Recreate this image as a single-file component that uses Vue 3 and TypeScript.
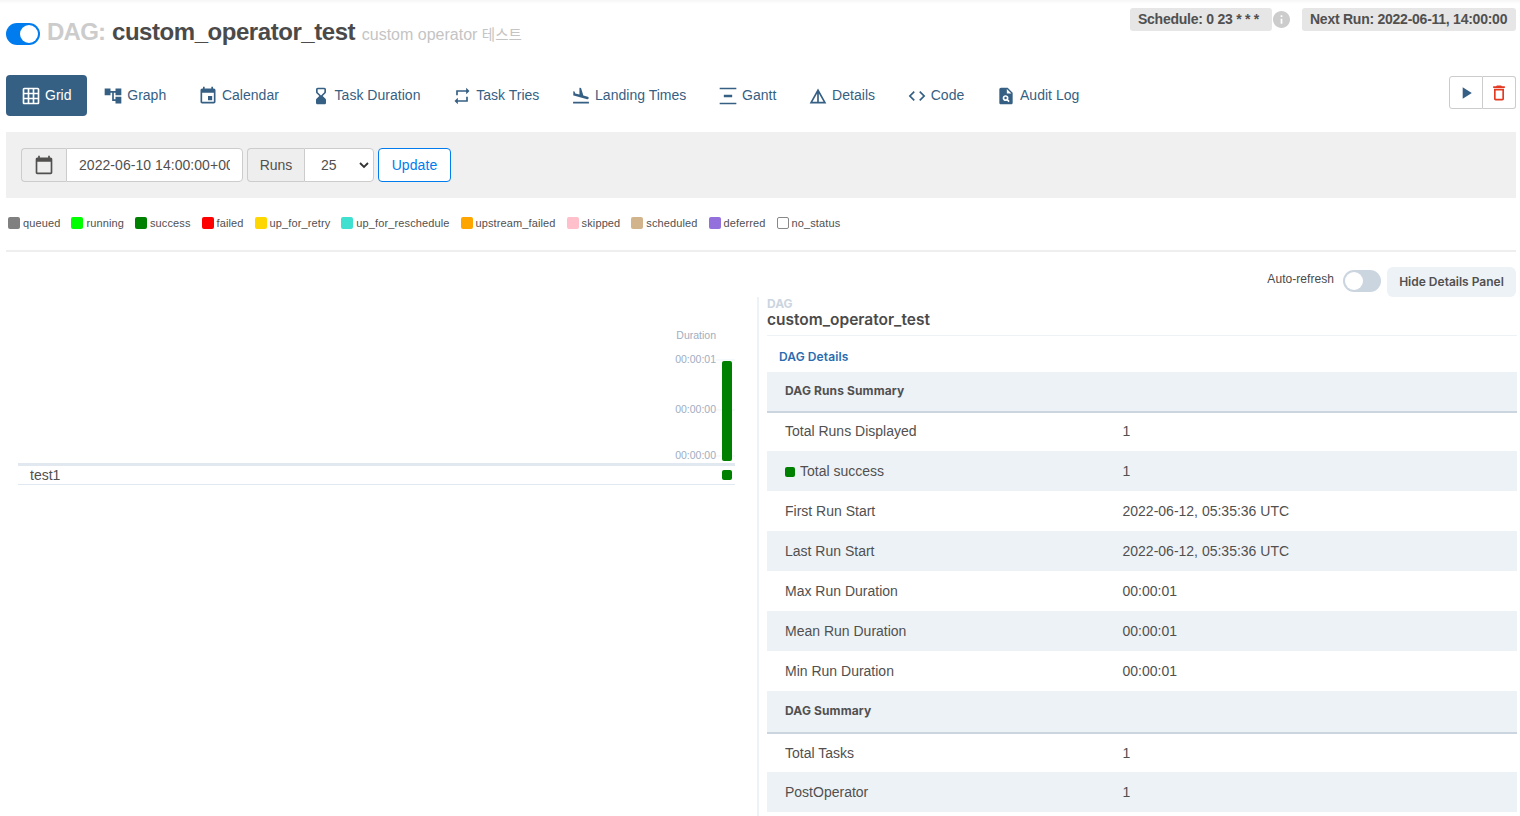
<script setup lang="ts">
interface Tab { label: string; paths: string[] }
const tabs: Tab[] = [
  { label: 'Grid', paths: ['M20 2H4c-1.1 0-2 .9-2 2v16c0 1.1.9 2 2 2h16c1.1 0 2-.9 2-2V4c0-1.1-.9-2-2-2zM8 20H4v-4h4v4zm0-6H4v-4h4v4zm0-6H4V4h4v4zm6 12h-4v-4h4v4zm0-6h-4v-4h4v4zm0-6h-4V4h4v4zm6 12h-4v-4h4v4zm0-6h-4v-4h4v4zm0-6h-4V4h4v4z'] },
  { label: 'Graph', paths: ['M22 11V3h-7v3H9V3H2v8h7V8h2v10h4v3h7v-8h-7v3h-2V8h2v3z'] },
  { label: 'Calendar', paths: ['M17 12h-5v5h5v-5zM16 1v2H8V1H6v2H5c-1.11 0-1.99.9-1.99 2L3 19c0 1.1.89 2 2 2h14c1.1 0 2-.9 2-2V5c0-1.1-.9-2-2-2h-1V1h-2zm3 18H5V8h14v11z'] },
  { label: 'Task Duration', paths: ['M16 22c1.1 0 2-.9 2-2l-.01-3.18c0-.53-.21-1.03-.58-1.41L14 12l3.41-3.43c.37-.37.58-.88.58-1.41L18 4c0-1.1-.9-2-2-2H8C6.9 2 6 2.9 6 4v3.16c0 .53.21 1.04.58 1.42L10 12l-3.41 3.4c-.38.38-.59.89-.59 1.42V20c0 1.1.9 2 2 2h8zM8 7.09V4h8v3.09c0 .27-.11.52-.29.71L12 11.5 8.29 7.79C8.11 7.61 8 7.35 8 7.09z'] },
  { label: 'Task Tries', paths: ['M7 7h10v3l4-4-4-4v3H5v6h2V7zm10 10H7v-3l-4 4 4 4v-3h12v-6h-2v4z'] },
  { label: 'Landing Times', paths: ['M2.5 19h19v2h-19zm7.18-5.73l4.35 1.16 5.31 1.42c.8.21 1.62-.26 1.84-1.06.21-.8-.26-1.62-1.06-1.84l-5.31-1.42-2.76-9.02L10.12 2v8.28L5.15 8.95l-.93-2.32-1.45-.39v5.17l1.6.43 5.31 1.43z'] },
  { label: 'Gantt', paths: ['M22 2v2H2V2h20zM7 10.5v3h10v-3H7zM2 20v2h20v-2H2z'] },
  { label: 'Details', paths: ['M12 3L2 21h20L12 3zm1 5.92L18.6 19H13V8.92zm-2 0V19H5.4L11 8.92z'] },
  { label: 'Code', paths: ['M9.4 16.6L4.8 12l4.6-4.6L8 6l-6 6 6 6 1.4-1.4zm5.2 0l4.6-4.6-4.6-4.6L16 6l6 6-6 6-1.4-1.4z'] },
  { label: 'Audit Log', paths: ['M14 2H6c-1.1 0-2 .9-2 2v16c0 1.1.9 2 2 2h12c1.1 0 2-.9 2-2V8l-6-6zm1.04 17.45l-1.88-1.88c-1.33.71-3.01.53-4.13-.59-1.37-1.37-1.37-3.58 0-4.95s3.58-1.37 4.95 0c1.12 1.12 1.31 2.8.59 4.13l1.88 1.88-1.41 1.41zM13 9V3.5L18.5 9H13z', 'M11.5 13a1.5 1.5 0 1 0 0 3 1.5 1.5 0 0 0 0-3z'] },
]
const legend: { name: string; color: string }[] = [
  { name: 'queued', color: 'gray' },
  { name: 'running', color: 'lime' },
  { name: 'success', color: 'green' },
  { name: 'failed', color: 'red' },
  { name: 'up_for_retry', color: 'gold' },
  { name: 'up_for_reschedule', color: 'turquoise' },
  { name: 'upstream_failed', color: 'orange' },
  { name: 'skipped', color: 'pink' },
  { name: 'scheduled', color: 'tan' },
  { name: 'deferred', color: 'mediumpurple' },
  { name: 'no_status', color: 'white' },
]
interface Row { label: string; value?: string; head?: boolean; dot?: boolean }
const rows: Row[] = [
  { label: 'DAG Runs Summary', head: true },
  { label: 'Total Runs Displayed', value: '1' },
  { label: 'Total success', value: '1', dot: true },
  { label: 'First Run Start', value: '2022-06-12, 05:35:36 UTC' },
  { label: 'Last Run Start', value: '2022-06-12, 05:35:36 UTC' },
  { label: 'Max Run Duration', value: '00:00:01' },
  { label: 'Mean Run Duration', value: '00:00:01' },
  { label: 'Min Run Duration', value: '00:00:01' },
  { label: 'DAG Summary', head: true },
  { label: 'Total Tasks', value: '1' },
  { label: 'PostOperator', value: '1' },
]
</script>

<template>
  <div class="page">
    <header class="top">
      <div class="title-wrap">
        <span class="pause"><span class="knob"></span></span>
        <h1 class="title"><span class="dag">DAG:</span> <span class="name">custom_operator_test</span> <small class="sub">custom operator <span class="ko">테스트</span></small></h1>
      </div>
      <div class="sched">
        <span class="badge">Schedule: 0 23 * * *</span>
        <svg class="info" viewBox="2 2 20 20"><path d="M12 2C6.48 2 2 6.48 2 12s4.48 10 10 10 10-4.48 10-10S17.52 2 12 2zm1 15h-2v-6h2v6zm0-8h-2V7h2v2z" /></svg>
        <span class="badge next">Next Run: 2022-06-11, 14:00:00</span>
      </div>
    </header>

    <nav class="nav">
      <ul class="tabs">
        <li v-for="t in tabs" :key="t.label" class="tab" :class="{ active: t.label === 'Grid' }">
          <svg class="ticon" viewBox="0 0 24 24"><path v-for="p in t.paths" :key="p" :d="p" /></svg>
          <span>{{ t.label }}</span>
        </li>
      </ul>
      <div class="actions">
        <button class="act"><svg viewBox="0 0 24 24" class="play"><path d="M8 5v14l11-7z" /></svg></button>
        <button class="act"><svg viewBox="0 0 24 24" class="trash"><path d="M6 19c0 1.1.9 2 2 2h8c1.1 0 2-.9 2-2V7H6v12zM8 9h8v10H8V9zm7.5-5l-1-1h-5l-1 1H5v2h14V4z" /></svg></button>
      </div>
    </nav>

    <section class="well">
      <div class="group">
        <span class="addon cal"><svg viewBox="0 0 24 24"><path d="M20 3h-1V1h-2v2H7V1H5v2H4c-1.1 0-2 .9-2 2v16c0 1.1.9 2 2 2h16c1.1 0 2-.9 2-2V5c0-1.1-.9-2-2-2zm0 18H4V8h16v13z" /></svg></span>
        <span class="field"><span class="clip">2022-06-10 14:00:00+00:00</span></span>
      </div>
      <div class="group">
        <span class="addon runs">Runs</span>
        <span class="field sel">25<svg viewBox="0 0 12 12" class="chev"><path d="M2 4l4 4 4-4" /></svg></span>
      </div>
      <button class="update">Update</button>
    </section>

    <div class="legend">
      <span v-for="l in legend" :key="l.name" class="leg">
        <i class="swatch" :class="{ empty: l.name === 'no_status' }" :style="{ background: l.color }"></i>{{ l.name }}
      </span>
    </div>
    <hr class="rule" />

    <div class="refresh">
      <span class="auto">Auto-refresh</span>
      <span class="switch"><span class="sknob"></span></span>
      <button class="hide">Hide Details Panel</button>
    </div>

    <main class="split">
      <section class="gridpane">
        <svg class="chart" width="717" height="136" viewBox="0 0 717 136">
          <text x="698" y="12" text-anchor="end" class="dur">Duration</text>
          <line x1="698" x2="717" y1="33" y2="33" class="tick" />
          <line x1="698" x2="717" y1="83" y2="83" class="tick" />
          <line x1="698" x2="717" y1="129" y2="129" class="tick" />
          <text x="698" y="36" text-anchor="end" class="lab">00:00:01</text>
          <text x="698" y="86" text-anchor="end" class="lab">00:00:00</text>
          <text x="698" y="132" text-anchor="end" class="lab">00:00:00</text>
          <rect x="704" y="34" width="10" height="100" rx="2" fill="green" />
        </svg>
        <div class="taskrow">
          <span class="task">test1</span>
          <i class="cell"></i>
        </div>
      </section>

      <section class="details">
        <div class="crumb">DAG</div>
        <div class="dagname">custom_operator_test</div>
        <div class="tabbar"><span class="tabdet">DAG Details</span></div>
        <table class="tbl">
          <tbody>
            <tr v-for="r in rows" :key="r.label" :class="{ head: r.head }">
              <td class="c1"><i v-if="r.dot" class="dot"></i>{{ r.label }}</td>
              <td>{{ r.value }}</td>
            </tr>
          </tbody>
        </table>
      </section>
    </main>
  </div>
</template>

<style>
html, body { margin: 0; background: #fff; overflow: hidden; }
</style>

<style scoped>
.page {
  width: 1520px;
  height: 816px;
  overflow: hidden;
  box-sizing: border-box;
  padding: 0 4px 0 6px;
  font-family: "Liberation Sans", Arial, sans-serif;
  font-size: 14px;
  color: #51504f;
  background: linear-gradient(#f5f5f5 0, #fff 4px);
  -webkit-font-smoothing: antialiased;
}
.top { display: flex; justify-content: space-between; height: 75px; }
.title-wrap { display: flex; align-items: center; height: 66px; }
.pause { width: 34px; height: 22px; box-sizing: border-box; border-radius: 11px; background: #017cee; display: flex; justify-content: flex-end; align-items: center; padding-right: 2px; margin: 2px 7px 0 0; }
.knob { width: 18px; height: 18px; border-radius: 50%; background: #fff; }
.title { margin: 0; font-size: 24px; font-weight: 700; line-height: 26px; white-space: nowrap; }
.dag { color: #ccc; letter-spacing: -0.75px; }
.name { color: #4a4a4a; letter-spacing: -0.45px; }
.sub { font-size: 16px; font-weight: 400; color: #c4c4c4; font-family: "Liberation Sans", "Noto Sans CJK KR", sans-serif; }
.ko { font-size: 14.5px; }
.sched { display: flex; align-items: center; height: 23px; margin-top: 8px; }
.badge { display: inline-block; height: 23px; line-height: 23px; padding: 0 8px; background: #e6e6e6; border-radius: 3px; font-weight: 700; font-size: 14px; letter-spacing: -0.25px; white-space: nowrap; box-sizing: border-box; width: 142px; }
.badge.next { width: 214px; margin-left: 12px; }
.info { width: 17px; height: 17px; fill: #ccc; margin-left: 1px; }

.nav { display: flex; justify-content: space-between; align-items: flex-start; height: 57px; }
.tabs { list-style: none; display: flex; gap: 1.7px; margin: 0; padding: 0; }
.tab { display: flex; align-items: center; gap: 4px; height: 41px; padding: 0 15px; color: #365f84; border-radius: 4px; white-space: nowrap; letter-spacing: 0.02px; }
.tab span { margin-top: -2px; }
.tab.active { background: #365f84; color: #fff; }
.ticon { width: 20px; height: 20px; fill: currentColor; flex: none; }
.actions { display: flex; margin-top: 1px; }
.act { width: 33.5px; height: 33px; background: #fff; border: 1px solid #ccc; padding: 0; display: flex; align-items: center; justify-content: center; }
.act:first-child { border-radius: 3px 0 0 3px; }
.act:last-child { border-radius: 0 3px 3px 0; border-left: 0; }
.act svg { width: 20px; height: 20px; }
.play { fill: #365f84; }
.trash { fill: #e43921; }

.well { height: 66px; box-sizing: border-box; background: #f0f0f0; padding: 16px 15px; display: flex; gap: 4px; width: 1510px; }
.group { display: flex; height: 34px; }
.addon { box-sizing: border-box; background: #eee; border: 1px solid #ccc; border-right: 0; border-radius: 4px 0 0 4px; display: flex; align-items: center; justify-content: center; height: 34px; }
.addon.cal { width: 45px; }
.addon.cal svg { width: 20px; height: 20px; fill: #51504f; }
.addon.runs { width: 57px; }
.field { box-sizing: border-box; height: 34px; background: #fff; border: 1px solid #ccc; border-radius: 0 4px 4px 0; display: flex; align-items: center; padding: 0 12px; }
.clip { width: 151px; overflow: hidden; white-space: nowrap; display: block; letter-spacing: 0.05px; }
.field.sel { width: 70px; padding: 0 3px 0 16px; justify-content: space-between; }
.chev { width: 12px; height: 12px; fill: none; stroke: #333; stroke-width: 1.8; }
.update { box-sizing: border-box; width: 73px; height: 34px; background: #fff; border: 1px solid #017cee; border-radius: 4px; color: #017cee; font: 14px "Liberation Sans", Arial, sans-serif; letter-spacing: 0.1px; padding: 0; }

.legend { display: flex; gap: 11px; height: 52px; align-items: center; padding: 0 0 2px 2px; font-size: 11px; letter-spacing: 0.12px; box-sizing: border-box; }
.leg { display: flex; align-items: center; white-space: nowrap; }
.swatch { width: 12px; height: 12px; border-radius: 2px; margin-right: 3px; box-sizing: border-box; }
.swatch.empty { border: 1px solid #888; }
.rule { height: 2px; border: 0; background: #eee; margin: 0; width: 1510px; }

.refresh { display: flex; justify-content: flex-end; align-items: center; height: 30px; margin-top: 15px; width: 1510px; font-size: 12px; }
.auto { margin-right: 9px; margin-top: -7px; color: #4a4a4a; letter-spacing: 0.05px; }
.switch { width: 38px; height: 22px; border-radius: 11px; background: #cbd5e0; display: flex; align-items: center; padding-left: 2px; box-sizing: border-box; margin-right: 6px; margin-top: -2px; }
.sknob { width: 18px; height: 18px; border-radius: 50%; background: #fff; }
.hide { width: 129px; height: 30px; border: 0; border-radius: 6px; background: #edf2f7; color: #51504f; font: 600 12px Inter, "Liberation Sans", sans-serif; padding: 0 0 2px; }

.split { display: flex; align-items: stretch; height: 519px; }
.gridpane { width: 753px; box-sizing: border-box; padding: 30px 0 0 12px; border-right: 2px solid #edf2f7; }
.chart { display: block; }
.dur { font: 10.5px "Liberation Sans", sans-serif; fill: #a0aec0; }
.lab { font: 10.5px "Liberation Sans", sans-serif; fill: #a0aec0; }
.tick { stroke: #edf2f7; stroke-width: 1; }
.taskrow { width: 717px; height: 22px; box-sizing: border-box; border-top: 3px solid #e2e8f0; border-bottom: 1px solid #e2e8f0; display: flex; align-items: center; justify-content: space-between; padding: 0 3px 0 12px; }
.task { font-size: 14px; color: #51504f; }
.cell { width: 10px; height: 10px; background: green; border-radius: 2px; }

.details { flex: 1; padding-left: 8px; font-family: "Liberation Sans", sans-serif; min-width: 0; }
.crumb { font: 700 12px/14px Inter, "Liberation Sans", sans-serif; color: #cbd5e0; }
.dagname { font: 600 15.5px/18px Inter, "Liberation Sans", sans-serif; color: #4a4a4a; padding-bottom: 6px; border-bottom: 1px solid #edf2f7; width: 750px; }
.tabbar { height: 36px; box-sizing: border-box; padding: 4px 0 0 12px; display: flex; align-items: center; }
.tabdet { font: 600 12px Inter, "Liberation Sans", sans-serif; letter-spacing: 0.1px; color: #2b6cb0; }
.tbl { width: 750px; border-collapse: collapse; table-layout: fixed; font-size: 14px; color: #51504f; }
.tbl tr { height: 40px; }
.tbl tr:nth-child(odd) { background: #edf2f7; }
.tbl tr.head { font: 700 12px Inter, "Liberation Sans", sans-serif; letter-spacing: 0.13px; }
.tbl tr:nth-child(2), .tbl tr:nth-child(10) { height: 39px; }
.tbl tr:nth-child(9) { height: 42px; }
.tbl tr.head td { border-bottom: 2px solid #cbd5e0; padding-bottom: 2px; }
.tbl tr:nth-child(2) td { padding-bottom: 2px; }
.tbl td { padding: 0 0 0 18px; }
.tbl .c1 { width: 45%; box-sizing: border-box; }
.dot { display: inline-block; width: 10px; height: 10px; background: green; border-radius: 2px; margin-right: 5px; vertical-align: -1px; }
</style>
